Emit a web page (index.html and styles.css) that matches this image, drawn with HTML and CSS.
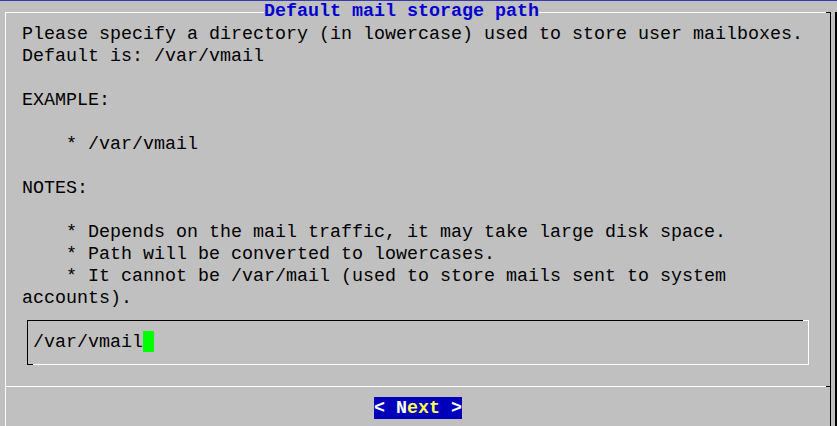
FILE: index.html
```html
<!DOCTYPE html>
<html>
<head>
<meta charset="utf-8">
<link rel="stylesheet" href="styles.css">
</head>
<body>
<div class="screen">
  <div class="band"></div>
  <div class="main">
    <div class="dialog">
      <div class="titlebar">
        <span class="seg seg-white seg-left"></span>
        <span class="title">Default mail storage path</span>
        <span class="seg seg-white"></span>
        <span class="seg seg-black"></span>
      </div>
<pre class="text">Please specify a directory (in lowercase) used to store user mailboxes.
Default is: /var/vmail

EXAMPLE:

    * /var/vmail

NOTES:

    * Depends on the mail traffic, it may take large disk space.
    * Path will be converted to lowercases.
    * It cannot be /var/mail (used to store mails sent to system
accounts).</pre>
      <div class="input"><span class="value">/var/vmail</span><span class="cursor"></span></div>
      <div class="separator">
        <span class="sep-white"></span>
        <span class="sep-black"></span>
      </div>
      <div class="buttons">
        <span class="button"><span class="b-white">&lt; </span><span class="b-key">N</span><span class="b-label">ext</span><span class="b-white"> &gt;</span></span>
      </div>
    </div>
    <div class="shadow"></div>
  </div>
</div>
</body>
</html>
```
FILE: styles.css
```css
html, body {
  margin: 0;
  padding: 0;
}
body {
  width: 837px;
  height: 426px;
  overflow: hidden;
  background: #c0c0c0;
  font-family: "Liberation Mono", "Courier New", monospace;
  font-size: 18.33px;
  line-height: 22px;
  color: #000;
}
.screen {
  display: flex;
  flex-direction: column;
  height: 426px;
}
.band {
  height: 1px;
  background: #3a3aa8;
  flex: none;
}
.main {
  display: flex;
  flex: 1;
  min-height: 0;
}
.dialog {
  display: flex;
  flex-direction: column;
  box-sizing: border-box;
  width: 826px;
  margin: 11px 0 0 5px;
  border-left: 1px solid #fff;
  border-right: 1px solid #000;
  height: 414px;
}
.shadow {
  width: 2px;
  margin-left: 4px;
  margin-top: 11px;
  background: #000;
  height: 414px;
}
.titlebar {
  display: flex;
  align-items: flex-start;
  height: 22px;
  margin-top: -11px;
}
.seg {
  height: 1px;
  margin-top: 11px;
}
.seg-white {
  flex: 1;
  background: #fff;
}
.seg-left {
  flex: none;
  width: 258px;
}
.seg-black {
  width: 4px;
  background: #000;
}
.title {
  color: #0000d0;
  font-weight: bold;
  white-space: pre;
}
.text {
  margin: 0;
  padding: 1px 0 0 16px;
  font: inherit;
  white-space: pre;
}
.input {
  box-sizing: border-box;
  width: 782px;
  height: 45px;
  margin: 10px 0 0 21px;
  padding: 12px 0 0 6px;
  background:
    linear-gradient(#000, #000) left top / calc(100% - 6px) 1px no-repeat,
    linear-gradient(#fff, #fff) right top / 6px 1px no-repeat,
    linear-gradient(#000, #000) left top / 1px 100% no-repeat,
    linear-gradient(#000, #000) left bottom / 6px 1px no-repeat,
    linear-gradient(#fff, #fff) right bottom / calc(100% - 6px) 1px no-repeat,
    linear-gradient(#fff, #fff) right top / 1px 100% no-repeat,
    #c0c0c0;
  white-space: pre;
  display: flex;
  align-items: flex-start;
}
.cursor {
  display: inline-block;
  width: 11px;
  height: 21px;
  margin-top: -1px;
  background: #00ff00;
}
.separator {
  display: flex;
  height: 1px;
  margin-top: 21px;
}
.sep-white {
  flex: 1;
  background: #fff;
}
.sep-black {
  width: 4px;
  background: #000;
}
.buttons {
  display: flex;
  margin-top: 10px;
  padding-left: 368px;
}
.button {
  display: inline-flex;
  box-sizing: border-box;
  height: 22px;
  padding-top: 1px;
  background: #0000bb;
  font-weight: bold;
  white-space: pre;
}
.b-white, .b-key {
  color: #ffffff;
}
.b-label {
  color: #ffff55;
}
```
